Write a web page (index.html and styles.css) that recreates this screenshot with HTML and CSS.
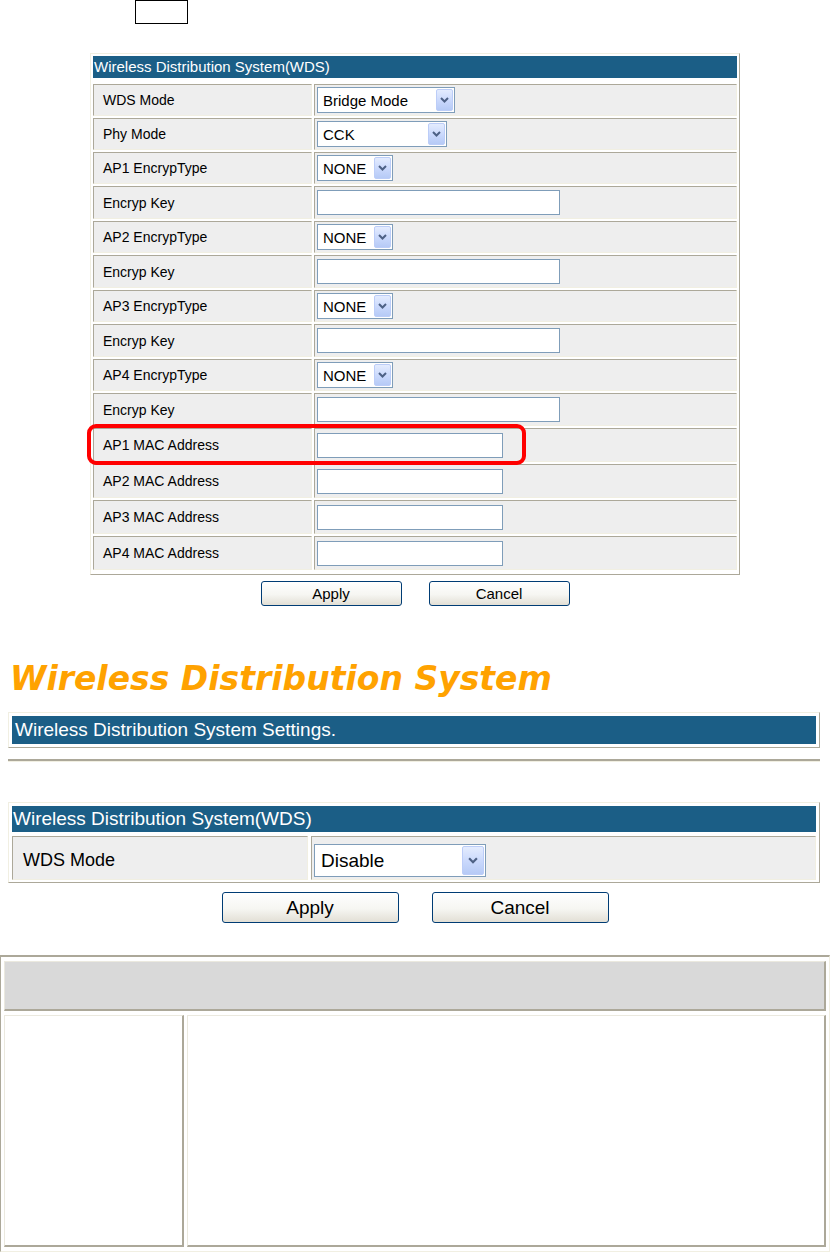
FILE: index.html
```html
<!DOCTYPE html>
<html lang="en">
<head>
  <meta charset="UTF-8" />
  <meta name="viewport" content="width=device-width, initial-scale=1.0" />
  <title>Wireless Distribution System</title>
  <link rel="stylesheet" href="styles.css">
</head>
<body>
  <div class="note-box"></div>

  <div class="wds-panel small">
    <div class="panel-head">Wireless Distribution System(WDS)</div>
    <table class="form-table">
      <tr class="r-sel">
        <td class="label">WDS Mode</td>
        <td class="value">
          <div class="select w-bridge"><span>Bridge Mode</span><span class="select-btn"><svg viewBox="0 0 9 6"><path d="M1 1L4.5 4.5L8 1" /></svg></span></div>
        </td>
      </tr>
      <tr class="r-sel">
        <td class="label">Phy Mode</td>
        <td class="value">
          <div class="select w-phy"><span>CCK</span><span class="select-btn"><svg viewBox="0 0 9 6"><path d="M1 1L4.5 4.5L8 1" /></svg></span></div>
        </td>
      </tr>
      <tr class="r-sel">
        <td class="label">AP1 EncrypType</td>
        <td class="value">
          <div class="select w-none"><span>NONE</span><span class="select-btn"><svg viewBox="0 0 9 6"><path d="M1 1L4.5 4.5L8 1" /></svg></span></div>
        </td>
      </tr>
      <tr class="r-key">
        <td class="label">Encryp Key</td>
        <td class="value"><input type="text" class="text-input w-key" /></td>
      </tr>
      <tr class="r-sel">
        <td class="label">AP2 EncrypType</td>
        <td class="value">
          <div class="select w-none"><span>NONE</span><span class="select-btn"><svg viewBox="0 0 9 6"><path d="M1 1L4.5 4.5L8 1" /></svg></span></div>
        </td>
      </tr>
      <tr class="r-key">
        <td class="label">Encryp Key</td>
        <td class="value"><input type="text" class="text-input w-key" /></td>
      </tr>
      <tr class="r-sel">
        <td class="label">AP3 EncrypType</td>
        <td class="value">
          <div class="select w-none"><span>NONE</span><span class="select-btn"><svg viewBox="0 0 9 6"><path d="M1 1L4.5 4.5L8 1" /></svg></span></div>
        </td>
      </tr>
      <tr class="r-key">
        <td class="label">Encryp Key</td>
        <td class="value"><input type="text" class="text-input w-key" /></td>
      </tr>
      <tr class="r-sel">
        <td class="label">AP4 EncrypType</td>
        <td class="value">
          <div class="select w-none"><span>NONE</span><span class="select-btn"><svg viewBox="0 0 9 6"><path d="M1 1L4.5 4.5L8 1" /></svg></span></div>
        </td>
      </tr>
      <tr class="r-key">
        <td class="label">Encryp Key</td>
        <td class="value"><input type="text" class="text-input w-key" /></td>
      </tr>
      <tr class="r-mac">
        <td class="label">AP1 MAC Address</td>
        <td class="value"><input type="text" class="text-input w-mac" /></td>
      </tr>
      <tr class="r-mac">
        <td class="label">AP2 MAC Address</td>
        <td class="value"><input type="text" class="text-input w-mac" /></td>
      </tr>
      <tr class="r-mac">
        <td class="label">AP3 MAC Address</td>
        <td class="value"><input type="text" class="text-input w-mac" /></td>
      </tr>
      <tr class="r-mac">
        <td class="label">AP4 MAC Address</td>
        <td class="value"><input type="text" class="text-input w-mac" /></td>
      </tr>
    </table>
  </div>

  <div class="btn-row small">
    <button class="btn">Apply</button>
    <button class="btn">Cancel</button>
  </div>

  <div class="highlight"></div>

  <h1 class="page-title">Wireless Distribution System</h1>

  <div class="settings-box">
    <div class="settings-head">Wireless Distribution System Settings.</div>
  </div>

  <div class="divider"></div>

  <div class="wds-panel large">
    <div class="panel-head">Wireless Distribution System(WDS)</div>
    <table class="form-table">
      <tr>
        <td class="label">WDS Mode</td>
        <td class="value">
          <div class="select big"><span>Disable</span><span class="select-btn"><svg viewBox="0 0 9 6"><path d="M1 1L4.5 4.5L8 1" /></svg></span></div>
        </td>
      </tr>
    </table>
  </div>

  <div class="btn-row large">
    <button class="btn">Apply</button>
    <button class="btn">Cancel</button>
  </div>

  <table class="info-table">
    <tr>
      <td class="info-head" colspan="2"></td>
    </tr>
    <tr>
      <td class="info-name"></td>
      <td class="info-desc"></td>
    </tr>
  </table>
</body>
</html>
```

FILE: styles.css
```css
body {
  margin: 0;
  font-family: "Liberation Sans", Arial, sans-serif;
  color: #000;
  background: #ffffff;
  position: relative;
}

.note-box {
  margin-left: 135px;
  width: 51px;
  height: 22px;
  border: 1px solid #000;
}

/* WDS panels */

.wds-panel {
  box-sizing: border-box;
  border: 1px solid;
  border-color: #f1efe2 #aca899 #aca899 #f1efe2;
}

.panel-head {
  background: #1b5e86;
  color: #fff;
  white-space: nowrap;
}

.form-table {
  border-collapse: separate;
  width: 100%;
}

.form-table td {
  box-sizing: border-box;
  background: #eeeeee;
  border: 1px solid;
  border-color: #aca899 #f1efe2 #f1efe2 #aca899;
  padding: 0;
}

.select {
  box-sizing: border-box;
  display: flex;
  align-items: center;
  justify-content: space-between;
  background: #fff;
  border: 1px solid #7f9db9;
  color: #000;
}

.select-btn {
  box-sizing: border-box;
  display: flex;
  align-items: center;
  justify-content: center;
  background: linear-gradient(180deg, #e4ecfe 0%, #c9d8fc 55%, #b6caf6 100%);
  border: 1px solid #bccdf8;
  border-radius: 2px;
}

.select-btn svg {
  width: 9px;
  height: 6px;
  fill: none;
  stroke: #4d6185;
  stroke-width: 2;
}

.text-input {
  box-sizing: border-box;
  display: block;
  height: 25px;
  margin: 0;
  padding: 0 3px;
  border: 1px solid #7f9db9;
  background: #fff;
}

/* small (zoomed) panel */

.small {
  margin: 29px 0 0 90px;
  width: 650px;
  padding-bottom: 2px;
}

.small .panel-head {
  margin: 2px 2px 0;
  height: 22px;
  line-height: 22px;
  font-size: 15px;
  padding-left: 1px;
}

.small .form-table {
  margin-top: 4px;
  border-spacing: 2px;
}

.small .label {
  width: 219px;
  padding-left: 9px;
  font-size: 14px;
}

.small .value {
  padding-left: 2px;
}

.r-sel td {
  height: 32px;
}

.r-key td {
  height: 33px;
}

.r-mac td {
  height: 34px;
}

.small .select {
  height: 26px;
  padding-left: 5px;
  font-size: 15px;
}

.small .select-btn {
  width: 17px;
  height: 22px;
  margin-right: 1px;
}

.w-bridge {
  width: 138px;
}

.w-phy {
  width: 130px;
}

.w-none {
  width: 76px;
}

.w-key {
  width: 243px;
}

.w-mac {
  width: 186px;
}

/* buttons */

.btn-row {
  display: flex;
  justify-content: center;
}

.btn {
  box-sizing: border-box;
  padding: 0;
  border: 1px solid #003c74;
  border-radius: 3px;
  background: linear-gradient(180deg, #ffffff 0%, #f6f6f2 55%, #e2dfd5 100%);
  color: #000;
  font-family: "Liberation Sans", Arial, sans-serif;
}

.btn-row.small {
  margin: 6px 0 0 0;
  width: auto;
  padding: 0;
  gap: 27px;
}

.btn-row.small .btn {
  width: 141px;
  height: 25px;
  font-size: 15px;
}

.highlight {
  position: absolute;
  left: 87px;
  top: 424px;
  width: 439px;
  height: 41px;
  box-sizing: border-box;
  border: 4px solid #ff0000;
  border-radius: 9px;
}

/* real page */

.page-title {
  margin: 54px 0 0 10px;
  font-family: "DejaVu Sans", Verdana, sans-serif;
  font-size: 33px;
  line-height: 38px;
  font-weight: bold;
  font-style: oblique;
  color: #ffa200;
}

.settings-box {
  margin: 14px 10px 0 8px;
  padding: 3px;
  border: 1px solid;
  border-color: #f1efe2 #aca899 #aca899 #f1efe2;
}

.settings-head {
  height: 28px;
  line-height: 28px;
  padding-left: 3px;
  background: #1b5e86;
  color: #fff;
  font-size: 19px;
}

.divider {
  margin: 11px 10px 0 8px;
  border-top: 2px solid #aca899;
  border-bottom: 1px solid #f1efe2;
}

.large {
  margin: 40px 0 0 8px;
  width: 812px;
}

.large .panel-head {
  margin: 3px 3px 0;
  height: 26px;
  line-height: 26px;
  font-size: 19px;
  padding-left: 1px;
}

.large .form-table {
  margin-top: 2px;
  border-spacing: 3px 2px;
}

.large .label {
  width: 296px;
  height: 44px;
  padding: 4px 0 0 10px;
  font-size: 18px;
}

.large .value {
  vertical-align: top;
  padding: 7px 0 0 2px;
}

.select.big {
  width: 172px;
  height: 33px;
  padding-left: 6px;
  font-size: 19px;
}

.select.big .select-btn {
  width: 22px;
  height: 29px;
  margin-right: 1px;
}

.select.big .select-btn svg {
  width: 10px;
  height: 7px;
}

.btn-row.large {
  margin: 9px 0 0 0;
  width: auto;
  gap: 33px;
}

.btn-row.large .btn {
  width: 177px;
  height: 31px;
  font-size: 19px;
}

/* parameter table */

.info-table {
  margin-top: 32px;
  width: 830px;
  height: 297px;
  border-collapse: separate;
  border-spacing: 3px 4px;
  border-style: solid;
  border-width: 2px 1px 1px 1px;
  border-color: #aca899 #f1efe2 #f1efe2 #aca899;
}

.info-table td {
  box-sizing: border-box;
  padding: 0;
  border-style: solid;
  border-width: 1px 2px 2px 1px;
  border-color: #ebe9df #aca899 #aca899 #ebe9df;
}

.info-head {
  height: 50px;
  background: #d9d9d9;
}

.info-name {
  width: 180px;
  height: 231px;
  background: #fff;
}

.info-desc {
  background: #fff;
}
```
